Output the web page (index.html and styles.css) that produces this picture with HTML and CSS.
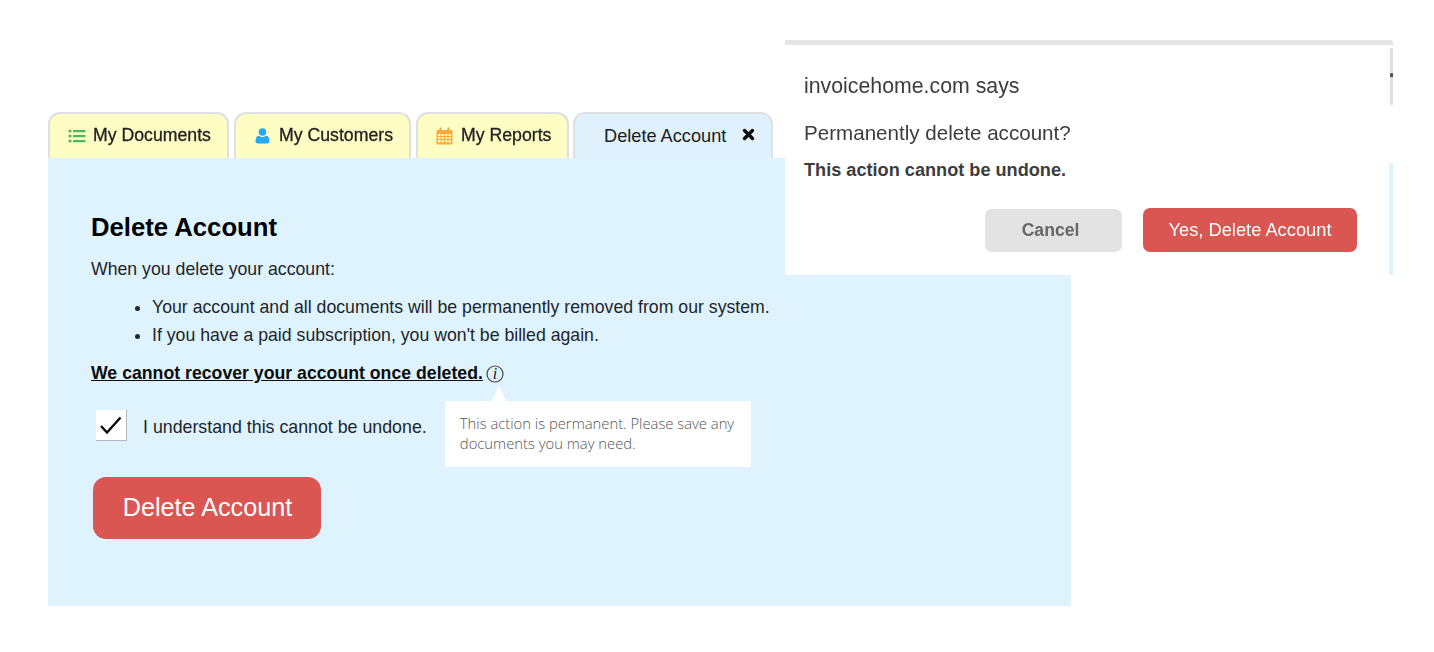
FILE: index.html
```html
<!DOCTYPE html>
<html lang="en">
<head>
<meta charset="utf-8">
<title>Delete Account</title>
<link rel="stylesheet" href="styles.css">
</head>
<body>
<main class="page">
  <nav class="tabs">
    <a class="tab tab-docs">
      <svg class="tab-icon" width="18" height="16" viewBox="0 0 18 16"><g fill="#4cb85c"><circle cx="2" cy="3" r="1.6"/><circle cx="2" cy="8" r="1.6"/><circle cx="2" cy="13" r="1.6"/><rect x="5" y="2" width="12.5" height="2.2" rx=".4"/><rect x="5" y="7" width="12.5" height="2.2" rx=".4"/><rect x="5" y="12" width="12.5" height="2.2" rx=".4"/></g></svg>
      <span class="tab-label">My Documents</span>
    </a>
    <a class="tab tab-customers">
      <svg class="tab-icon" width="15" height="16" viewBox="0 0 15 16"><g fill="#27a9f1"><circle cx="7.5" cy="4" r="3.8"/><path d="M0.5 13c0-3.6 1.7-5.2 3.6-5.2 1 .8 2.100 1.200 3.400 1.200s2.400-.4 3.400-1.200c1.900 0 3.600 1.600 3.600 5.200 0 1.500-1 2.500-2.400 2.500H2.900C1.500 15.500.5 14.500.5 13z"/></g></svg>
      <span class="tab-label">My Customers</span>
    </a>
    <a class="tab tab-reports">
      <svg class="tab-icon" width="17" height="18" viewBox="0 0 17 18"><path fill="#f9a83a" fill-rule="evenodd" d="M2 3h1.500V1.300a1 1 0 0 1 2 0V3h6V1.300a1 1 0 0 1 2 0V3H15a1.500 1.500 0 0 1 1.500 1.500V16a1.500 1.500 0 0 1-1.500 1.500H2A1.500 1.500 0 0 1 .5 16V4.500A1.500 1.500 0 0 1 2 3zM2 7v2h2.500V7zm3.500 0v2h2.500V7zm3.500 0v2h2.500V7zm3.500 0v2H15V7zM2 10v2h2.500v-2zm3.500 0v2h2.500v-2zm3.500 0v2h2.500v-2zm3.500 0v2H15v-2zM2 13v2.500h2.500V13zm3.500 0v2.500h2.500V13zm3.500 0v2.500h2.500V13zm3.500 0v2.500H15V13z"/></svg>
      <span class="tab-label">My Reports</span>
    </a>
    <a class="tab tab-active">
      <span class="active-label">Delete Account</span>
      <svg class="close-icon" width="13" height="13" viewBox="0 0 13 13"><path d="M2.500 2.500l8 8M10.500 2.500l-8 8" stroke="#0b0b0b" stroke-width="3.400" stroke-linecap="round"/></svg>
    </a>
  </nav>
  <section class="panel">
    <h1 class="title">Delete Account</h1>
    <p class="lead">When you delete your account:</p>
    <ul class="points">
      <li>Your account and all documents will be permanently removed from our system.</li>
      <li>If you have a paid subscription, you won't be billed again.</li>
    </ul>
    <p class="warning"><strong class="warning-text">We cannot recover your account once deleted.</strong>
      <span class="info-wrap">
        <svg class="info-icon" width="18" height="18" viewBox="0 0 18 18"><circle cx="9" cy="9" r="8" fill="none" stroke="#444" stroke-width="1.200"/><text class="info-i" x="9" y="14" text-anchor="middle">i</text></svg>
        <span class="tooltip">This action is permanent. Please save any documents you may need.</span>
      </span>
    </p>
    <label class="confirm">
      <span class="checkbox"><svg width="24" height="20" viewBox="0 0 24 20"><path d="M2 11l6 6.500L21.500 2.500" fill="none" stroke="#0a0a0a" stroke-width="2.400"/></svg></span>
      <span class="confirm-text">I understand this cannot be undone.</span>
    </label>
    <button class="delete-btn" type="button">Delete Account</button>
  </section>
  <aside class="dialog">
    <p class="dialog-origin">invoicehome.com says</p>
    <p class="dialog-question">Permanently delete account?</p>
    <p class="dialog-note">This action cannot be undone.</p>
    <div class="dialog-actions">
      <button class="cancel-btn" type="button">Cancel</button>
      <button class="yes-btn" type="button">Yes, Delete Account</button>
    </div>
  </aside>
</main>
</body>
</html>
```
FILE: styles.css
```css
* { box-sizing: border-box; }
html, body { margin: 0; padding: 0; background: #fff; }
body { font-family: "Liberation Sans", Arial, sans-serif; color: #212529; overflow: hidden; }
.page { position: relative; width: 1434px; height: 652px; padding: 112px 0 0 48px; }
.tabs { display: flex; height: 46px; gap: 5px; }
.tab { display: flex; align-items: center; height: 46px; padding-bottom: 1px; border: 2px solid #dfe0e4; border-bottom: 0; border-radius: 12px 12px 0 0; background: #fefdc4; }
.tab-docs { width: 181px; padding-left: 18px; gap: 7px; }
.tab-customers { width: 177px; padding-left: 19px; gap: 9px; }
.tab-reports { width: 153px; padding-left: 18px; gap: 8px; }
.tab-active { width: 200px; margin-left: -1px; padding-left: 29px; background: #dff1fd; }
.tab-icon { flex: none; }
.tab-label { font-size: 17.7px; color: #222; -webkit-text-stroke: .3px #222; filter: blur(.4px); }
.active-label { font-size: 18.2px; color: #1c1c1c; position: relative; top: 1px; }
.close-icon { position: relative; top: -1px; margin-left: 16px; }
.panel { width: 1023px; height: 448px; padding: 55px 43px 0; background: #dff3fe; }
.title { margin: 0; font-size: 25.7px; line-height: 29px; font-weight: 700; color: #000; }
.lead { margin: 13px 0 0; font-size: 17.7px; line-height: 28px; }
.points { margin: 10px 0 0; padding-left: 61px; font-size: 17.7px; line-height: 28px; }
.warning { display: flex; align-items: center; margin: 10px 0 0; line-height: 28px; font-size: 17.7px; }
.warning-text { color: #0c0c0c; text-decoration: underline; }
.info-wrap { position: relative; top: 1px; display: inline-flex; margin-left: 3px; }
.info-i { font-family: "Liberation Serif", serif; font-style: italic; font-size: 16px; fill: #222; }
.tooltip { position: absolute; left: -41px; top: 36px; width: 306px; height: 66px; padding: 12px 15px; background: #fff; font-family: "Open Sans", sans-serif; font-weight: 300; font-size: 14.8px; line-height: 20px; color: #555; }
.tooltip::before { content: ""; position: absolute; left: 47px; top: -16px; border: 7px solid transparent; border-top: 0; border-bottom: 16px solid #fff; }
.confirm { display: flex; align-items: center; margin: 23px 0 0 5px; gap: 16px; font-size: 17.8px; color: #212529; }
.confirm-text { padding-top: 3px; }
.checkbox { display: flex; align-items: center; justify-content: center; width: 31px; height: 31px; background: #fff; border-right: 1px solid #b4b8bb; border-bottom: 1px solid #b4b8bb; }
.delete-btn { display: block; width: 228px; height: 62px; margin: 36px 0 0 2px; padding: 0 0 2px 1px; border: 0; border-radius: 13px; background: #d95652; color: #fff; font: 400 25.2px "Liberation Sans", Arial, sans-serif; }
.dialog { position: absolute; left: 785px; top: 40px; width: 608px; height: 235px; padding: 27px 36px 0 19px; background: #fff; border-top: 5px solid #e4e4e4; border-radius: 0 3px 0 0; color: #3c3c3c; }
.dialog::before { content: ""; position: absolute; right: 0; top: 3px; width: 3px; height: 57px; background: linear-gradient(#e2e2e2 43%, #555 45%, #555 50%, #e2e2e2 52%); }
.dialog::after { content: ""; position: absolute; right: 0; top: 118px; bottom: 0; width: 4px; background: #dff3fe; }
.dialog-origin { margin: 0; font-size: 21.3px; line-height: 28px; filter: blur(.3px); }
.dialog-question { margin: 19px 0 0; font-size: 20.6px; line-height: 28px; filter: blur(.3px); }
.dialog-note { margin: 12px 0 0; font-size: 18.15px; line-height: 22px; font-weight: 700; }
.dialog-actions { display: flex; justify-content: flex-end; align-items: flex-end; gap: 21px; margin-top: 27px; }
.cancel-btn, .yes-btn { border: 0; border-radius: 7px; font-family: "Liberation Sans", Arial, sans-serif; filter: blur(.3px); }
.cancel-btn { width: 137px; height: 43px; padding: 0 6px 0 0; background: #e3e3e3; color: #666; font-size: 17.6px; font-weight: 700; }
.yes-btn { width: 214px; height: 44px; padding: 0; background: #d95652; color: #fff; font-size: 18.3px; }
```
